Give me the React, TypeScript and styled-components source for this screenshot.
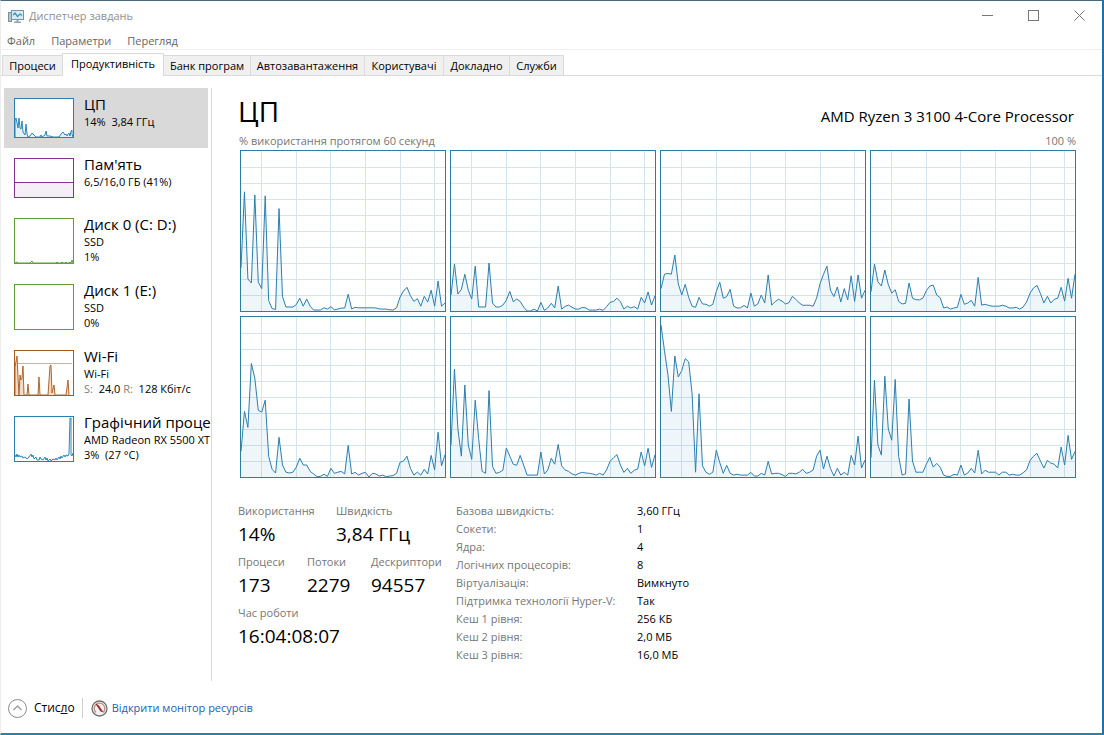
import React from "react";
import styled, { createGlobalStyle } from "styled-components";

const GlobalStyle = createGlobalStyle`
  * { box-sizing: border-box; }
  body { margin: 0; background: #fff; }
  button { font: inherit; color: inherit; border: 0; background: none; padding: 0; cursor: default; }
  dl, dd, dt, h1, h2 { margin: 0; font-weight: 400; }
`;

const Window = styled.div`
  min-height: 100vh;
  display: flex;
  flex-direction: column;
  background: #fff;
  color: #000;
  border-top: 1px solid #476a7e;
  border-right: 2px solid #1b74b0;
  border-bottom: 2px solid #1e86b4;
  border-left: 1px solid #ececec;
  font-family: "Open Sans", "Noto Sans", sans-serif;
  font-size: 11px;
  line-height: 16px;
`;

const TitleBar = styled.header`
  display: flex;
  align-items: center;
  height: 30px;
  padding-left: 7px;
  color: #8f8f8f;
`;

const WindowTitle = styled.span`
  flex: 1;
  padding-left: 4px;
`;

const CaptionButton = styled.button`
  width: 46px;
  height: 30px;
  padding-bottom: 2px;
  display: flex;
  align-items: center;
  justify-content: center;
`;

const MenuBar = styled.nav`
  display: flex;
  gap: 16px;
  height: 19px;
  padding-left: 6px;
  color: #666;
  border-bottom: 1px solid #efefef;
`;

const MenuItem = styled.button`
  height: 19px;
`;

const TabStrip = styled.div`
  display: flex;
  align-items: flex-end;
  height: 26px;
  padding-left: 1px;
  box-shadow: inset 0 -1px 0 #dadada;
`;

const Tab = styled.button<{ $width: number; $active?: boolean }>`
  flex: 0 0 ${(p) => p.$width}px;
  height: ${(p) => (p.$active ? 23 : 21)}px;
  padding-bottom: ${(p) => (p.$active ? 2 : 0)}px;
  background: ${(p) => (p.$active ? "#fff" : "#f0f0f0")};
  border: 1px solid #dadada;
  border-bottom-color: ${(p) => (p.$active ? "#fff" : "#dadada")};
  margin-right: -1px;
  white-space: nowrap;
`;

const Body = styled.div`
  flex: 1;
  display: flex;
  padding-top: 12px;
`;

const Sidebar = styled.aside`
  flex: 0 0 211px;
  display: flex;
  flex-direction: column;
  padding-left: 3px;
  overflow: hidden;
  border-right: 1px solid #d9d9d9;
  margin-bottom: 4px;
`;

const Resource = styled.button<{ $active?: boolean; $tall?: boolean }>`
  display: flex;
  align-items: flex-start;
  gap: 10px;
  height: ${(p) => (p.$tall ? 66 : 60)}px;
  margin-right: ${(p) => (p.$active ? 3 : 0)}px;
  padding: 10px 0 0 10px;
  text-align: left;
  white-space: nowrap;
  overflow: hidden;
  background: ${(p) => (p.$active ? "#d9d9d9" : "transparent")};
`;

const Thumb = styled.svg<{ $color: string; $tall?: boolean }>`
  flex: none;
  width: 60px;
  height: ${(p) => (p.$tall ? 46 : 40)}px;
  background: #fff;
  border: 1px solid ${(p) => p.$color};
`;

const ResourceText = styled.span`
  display: flex;
  flex-direction: column;
  margin-top: -3px;
  line-height: 15px;
`;

const ResourceName = styled.span`
  font-size: 15px;
  line-height: 19px;
`;

const Muted = styled.span`
  color: #808080;
`;

const Main = styled.main`
  flex: 1;
  min-width: 0;
  padding: 4px 26px 0 26px;
`;

const Heading = styled.div`
  display: flex;
  justify-content: space-between;
  align-items: flex-end;
  height: 38px;
`;

const Title = styled.h1`
  font-size: 28px;
  line-height: 38px;
`;

const Model = styled.h2`
  font-size: 15px;
  line-height: 28px;
  padding-right: 2px;
`;

const ScaleRow = styled.div`
  display: flex;
  justify-content: space-between;
  height: 20px;
  padding: 3px 0 0 1px;
  color: #767676;
`;

const ChartGrid = styled.div`
  display: grid;
  grid-template-columns: repeat(4, 1fr);
  gap: 4px;
  padding-left: 2px;
`;

const Chart = styled.svg`
  display: block;
  width: 100%;
  height: 162px;
  border: 1px solid #2b7f9e;
  background: #fff;
`;

const Stats = styled.section`
  display: flex;
  padding-top: 24px;
`;

const Counters = styled.div`
  flex: 0 0 218px;
  display: flex;
  flex-direction: column;
`;

const CounterRow = styled.dl`
  display: flex;
  height: 51px;
`;

const Counter = styled.div<{ $width?: number }>`
  flex: 0 0 ${(p) => (p.$width ? `${p.$width}px` : "auto")};
  dt { color: #767676; line-height: 18px; }
  dd { font-size: 19px; line-height: 28px; }
`;

const Details = styled.dl`
  display: grid;
  grid-template-columns: 181px auto;
  grid-auto-rows: 18px;
  line-height: 18px;
  dt { color: #767676; }
`;

const Footer = styled.footer`
  display: flex;
  align-items: center;
  height: 48px;
  padding: 0 0 2px 7px;
`;

const Collapse = styled.button`
  display: flex;
  align-items: center;
  gap: 7px;
  height: 20px;
  padding-right: 7px;
  border-right: 1px solid #d0d0d0;
  font-size: 12px;
`;

const MonitorLink = styled.a`
  display: flex;
  align-items: center;
  gap: 4px;
  padding-left: 8px;
  color: #1c5fb4;
  text-decoration: none;
`;

const cores: number[][] = [
  [
    27, 74.5, 20, 17.5, 72.5, 18, 14, 72, 6.5, 1.5,
    1, 64, 9, 2.5, 2.5, 2.5, 4, 8, 3, 7.5,
    3, 0.6, 0.6, 0.6, 2, 1.2, 2.7, 0.8, 1.2, 1.8,
    1.9, 10.5, 1.3, 2.3, 2, 2, 2, 2, 2, 1.9,
    1.3, 1.2, 1.2, 0.8, 0.6, 2, 8.7, 12.5, 14.8, 9.6,
    6, 7.7, 3, 9.2, 5.6, 13, 3, 18.7, 3, 5,
  ],
  [
    10, 29.4, 10.6, 13.5, 23, 13, 7.5, 28, 2.5, 2.5,
    2.5, 30, 5, 2.5, 2.5, 3.7, 6.7, 12.3, 5.8, 7.5,
    6, 2.5, 0, 0, 1.2, 0, 5.4, 0.4, 1.9, 4.8,
    1.9, 15.6, 1.2, 2.9, 3.7, 2.3, 1.2, 1.2, 2.3, 1.9,
    0.6, 0.6, 0.6, 1.2, 0.4, 2.7, 5.4, 6, 8, 5.8,
    1.2, 3, 1.9, 2.7, 1.2, 8.5, 5, 11.9, 3.7, 9.6,
  ],
  [
    14, 23, 23.5, 23, 35, 17, 10, 16.7, 8.5, 3,
    2.3, 8.5, 4.4, 4.2, 3, 4.2, 12.3, 18, 8, 9,
    13.5, 3, 1.9, 2, 3.5, 1.9, 11.2, 3, 4.4, 10,
    5, 22.5, 3.7, 5.8, 7.3, 6.2, 4.4, 5.2, 9.2, 7.3,
    5, 3.6, 3.6, 3.6, 3, 8, 17, 23, 28, 13,
    9, 15, 5.6, 14, 7, 22, 6, 22.5, 8, 13,
  ],
  [
    12, 29.4, 18.3, 15.6, 25.6, 16.5, 11.2, 13.3, 6, 4.4,
    4.8, 17.5, 8, 7, 7, 8, 12.7, 15.6, 16.2, 10,
    8.3, 1.9, 2.5, 1.2, 1.9, 2.3, 10.4, 4.2, 5, 6.7,
    3, 21, 3.7, 4.2, 3.5, 3, 3, 3, 3.6, 3,
    1.9, 1.9, 2.3, 1.2, 2.5, 5.6, 11.2, 14.4, 16, 11,
    5, 9.2, 5, 7.3, 8, 14.8, 6.2, 20.4, 8, 23,
  ],
  [
    16, 41, 31, 71, 61.7, 41.7, 40.6, 48, 13, 4.8,
    2.5, 24.8, 7.5, 3, 2.5, 3, 6.2, 11.7, 7.5, 7.5,
    3.5, 1.9, 0.2, 0.4, 1.7, 0.4, 5.4, 2.3, 3, 3.5,
    1.9, 19.8, 1.9, 2.9, 1.2, 2.3, 2.9, 0, 2.3, 1.9,
    0.6, 1.2, 0.2, 0.6, 0.9, 2.3, 9.2, 10, 13, 5.4,
    1.2, 3, 1.2, 4.8, 1.9, 13.5, 4.4, 28, 7, 14,
  ],
  [
    20, 67.5, 30, 13, 57.5, 20, 11, 48, 24, 3.5,
    2.3, 54, 6.7, 2.3, 2.9, 4.2, 18, 13, 8, 7.3,
    13.5, 7.5, 1.2, 1.2, 1.2, 1.2, 15.6, 1.9, 4.4, 11.7,
    8, 20.4, 7, 4.4, 3.5, 1.9, 1.2, 2.3, 2.9, 2.5,
    2.3, 1.9, 1.2, 2.3, 1.2, 4.4, 9.8, 12, 14, 7.5,
    2.9, 5.4, 2.3, 4.2, 5, 15.6, 7, 18, 6, 14,
  ],
  [
    95, 79, 64, 41, 75.6, 62.5, 66.5, 74, 72, 52,
    3, 52, 7, 3, 1.7, 3, 16.7, 9, 2.3, 7.3,
    2.3, 1.2, 1.7, 1.2, 1.2, 1.2, 2.9, 0.6, 0.6, 2.3,
    1.2, 9.8, 1.9, 2.3, 2.3, 1.5, 0.4, 2.3, 2.3, 1.9,
    3, 4.8, 2.3, 3, 4.4, 13, 16.7, 5, 13, 5.4,
    0.6, 5.4, 1.2, 2.9, 1.2, 13.5, 7.5, 25.6, 5.6, 10.6,
  ],
  [
    12, 60.6, 20, 13.7, 63, 30, 23, 61, 13, 1.2,
    1.9, 48.7, 10, 3, 3, 3, 8, 12.3, 6.2, 8.5,
    6.2, 1.2, 0.4, 0.4, 1.7, 1.2, 7.5, 1.2, 2.5, 5.4,
    2.5, 16.7, 1.9, 4.2, 3, 3, 3, 1.2, 3, 3,
    1.2, 1.7, 1.2, 1.2, 2.7, 4.4, 10.4, 13, 14.8, 10,
    5.6, 10.4, 8.7, 8, 5.6, 18.7, 7.5, 26, 11, 16,
  ],
];

const verticals = [6, 16, 26, 36, 46, 56];
const horizontals = [10, 20, 30, 40, 50, 60, 70, 80, 90];

function CoreChart({ values, index }: { values: number[]; index: number }) {
  const points = values.map((v, i) => `${i},${100 - v}`).join(" ");
  return (
    <Chart
      viewBox="0 0 59 100"
      preserveAspectRatio="none"
      role="img"
      aria-label={`ЦП ${index}`}
    >
      <g stroke="#d6e4ec" strokeWidth="1" shapeRendering="crispEdges">
        {verticals.map((x) => (
          <line key={x} x1={x} x2={x} y1="0" y2="100" vectorEffect="non-scaling-stroke" />
        ))}
        {horizontals.map((y) => (
          <line key={y} x1="0" x2="59" y1={y} y2={y} vectorEffect="non-scaling-stroke" />
        ))}
      </g>
      <polygon points={`0,100 ${points} 59,100`} fill="#117dbb" fillOpacity="0.07" />
      <polyline
        points={points}
        fill="none"
        stroke="#2a7fae"
        strokeWidth="1"
        strokeLinejoin="round"
        vectorEffect="non-scaling-stroke"
      />
    </Chart>
  );
}

type ResourceData = {
  name: string;
  lines: React.ReactNode[];
  color: string;
  tall?: boolean;
  active?: boolean;
  drawing?: React.ReactNode;
};

const resources: ResourceData[] = [
  {
    name: "ЦП",
    lines: ["14%\u00a0 3,84 ГГц"],
    color: "#2b7fae",
    active: true,
    drawing: (
      <path
        d="M0 38V21L1 19L3 29L4 19L5 29L6 30L7 22L8 33L10 36L11 25L12 35L13 38L15 37L17 34L19 36L21 38L25 38L26 36L27 38L30 36L31 32L32 37L35 37L38 38L44 38L46 35L48 33L50 36L51 35L52 37L53 35L54 34L55 37L56 32L57 31V35L58 38"
        fill="#e4f1f9"
        stroke="#2b86b8"
      />
    ),
  },
  {
    name: "Пам'ять",
    lines: ["6,5/16,0 ГБ (41%)"],
    color: "#84318f",
    drawing: (
      <>
        <rect x="0" y="23" width="58" height="15" fill="#f4eff7" />
        <path d="M0 23.500H58" stroke="#84318f" />
      </>
    ),
  },
  {
    name: "Диск 0 (C: D:)",
    lines: ["SSD", "1%"],
    color: "#5f9e3a",
    tall: true,
    drawing: (
      <path
        d="M0 44L2 43L3 44H15L17 42L18 44H41L42 43L43 44H46L47 43L48 44H50L51 43L52 44H54L55 43L56 44L57 41L58 44"
        fill="none"
        stroke="#5f9e3a"
      />
    ),
  },
  { name: "Диск 1 (E:)", lines: ["SSD", "0%"], color: "#5f9e3a", tall: true },
  {
    name: "Wi-Fi",
    lines: [
      "Wi-Fi",
      <>
        <Muted>S:</Muted>&nbsp; 24,0 <Muted>R:</Muted>&nbsp; 128 Кбіт/с
      </>,
    ],
    color: "#a65a1c",
    tall: true,
    drawing: (
      <>
        <path d="M0 12.500H57" stroke="#c4b3a6" />
        <path
          d="M0 44V16L2 5L3 26L4 44L5 24L6 29L7 27L8 15L9 44H12L13 33L14 44H23L24 26L25 44H33L35 15L36 14L37 42L39 34L40 44H51L53 29L54 44"
          fill="#f0dccb"
          stroke="#b0652a"
        />
      </>
    ),
  },
  {
    name: "Графічний процесор",
    lines: ["AMD Radeon RX 5500 XT", "3%\u00a0 (27 °C)"],
    color: "#2b7fae",
    tall: true,
    drawing: (
      <path
        d="M0 38L1 40L2 37L3 40L4 38L5 40L7 39L8 41L10 40L12 42L14 40L16 37L17 40L18 38L19 42L21 40L22 43L24 43L25 40L26 42L28 43L30 40L31 43L32 41L33 44L35 42L36 44L38 42L40 43L41 41L42 43L44 40L45 42L46 39L47 41L49 38L50 40L51 38L53 39L54 37L55 1L56 1L56 38L57 39L58 36"
        fill="none"
        stroke="#2b86b8"
      />
    ),
  },
];

const tabs: { label: string; width: number; active?: boolean }[] = [
  { label: "Процеси", width: 61 },
  { label: "Продуктивність", width: 102, active: true },
  { label: "Банк програм", width: 88 },
  { label: "Автозавантаження", width: 115 },
  { label: "Користувачі", width: 80 },
  { label: "Докладно", width: 67 },
  { label: "Служби", width: 55 },
];

const counters: { label: string; value: string; width?: number }[][] = [
  [
    { label: "Використання", value: "14%", width: 98 },
    { label: "Швидкість", value: "3,84 ГГц" },
  ],
  [
    { label: "Процеси", value: "173", width: 69 },
    { label: "Потоки", value: "2279", width: 64 },
    { label: "Дескриптори", value: "94557" },
  ],
  [{ label: "Час роботи", value: "16:04:08:07" }],
];

const details: [string, string][] = [
  ["Базова швидкість:", "3,60 ГГц"],
  ["Сокети:", "1"],
  ["Ядра:", "4"],
  ["Логічних процесорів:", "8"],
  ["Віртуалізація:", "Вимкнуто"],
  ["Підтримка технології Hyper-V:", "Так"],
  ["Кеш 1 рівня:", "256 КБ"],
  ["Кеш 2 рівня:", "2,0 МБ"],
  ["Кеш 3 рівня:", "16,0 МБ"],
];

const AppIcon = () => (
  <svg width="17" height="15" viewBox="0 0 17 15" aria-hidden="true">
    <rect x="0.500" y="3.500" width="3" height="9" fill="#b9c3c8" stroke="#7f9199" />
    <rect x="3.500" y="1.500" width="12" height="9" fill="#d4edf5" stroke="#7c929c" />
    <path d="M5 6L7 4L9.500 7.500L12 5L14 6.500" fill="none" stroke="#3d8fb0" strokeWidth="1.300" />
    <path d="M8.500 11h2v1.500h2.500v1.500h-7v-1.500H8.500z" fill="#98a6ac" />
  </svg>
);

const GaugeIcon = () => (
  <svg width="17" height="17" viewBox="0 0 17 17" aria-hidden="true">
    <circle cx="8.500" cy="8.500" r="7.500" fill="#f4f0ee" stroke="#6f7274" strokeWidth="1.300" />
    <path d="M5 12.500A5.300 5.300 0 1 1 12 12.500" fill="none" stroke="#b98f8a" strokeWidth="1.300" />
    <path d="M5 4L7.500 5.500L11.500 11.500L10 11.500Z" fill="#b3242a" stroke="#a02025" strokeWidth="0.800" />
  </svg>
);

export default function App() {
  return (
    <>
      <GlobalStyle />
      <Window>
        <TitleBar>
          <AppIcon />
          <WindowTitle>Диспетчер завдань</WindowTitle>
          <CaptionButton aria-label="Згорнути">
            <svg width="11" height="11" stroke="#777" fill="none">
              <path d="M0 5.500H11" />
            </svg>
          </CaptionButton>
          <CaptionButton aria-label="Розгорнути">
            <svg width="11" height="11" stroke="#777" fill="none">
              <rect x="0.500" y="0.500" width="10" height="10" />
            </svg>
          </CaptionButton>
          <CaptionButton aria-label="Закрити">
            <svg width="11" height="11" stroke="#777" fill="none">
              <path d="M0.500 0.500L10.500 10.500M10.500 0.500L0.500 10.500" />
            </svg>
          </CaptionButton>
        </TitleBar>
        <MenuBar>
          <MenuItem>Файл</MenuItem>
          <MenuItem>Параметри</MenuItem>
          <MenuItem>Перегляд</MenuItem>
        </MenuBar>
        <TabStrip role="tablist">
          {tabs.map((t) => (
            <Tab key={t.label} role="tab" aria-selected={!!t.active} $width={t.width} $active={t.active}>
              {t.label}
            </Tab>
          ))}
        </TabStrip>
        <Body>
          <Sidebar>
            {resources.map((r) => (
              <Resource key={r.name} $active={r.active} $tall={r.tall}>
                <Thumb $color={r.color} $tall={r.tall} viewBox={r.tall ? "0 0 58 44" : "0 0 58 38"} aria-hidden="true">
                  {r.drawing}
                </Thumb>
                <ResourceText>
                  <ResourceName>{r.name}</ResourceName>
                  {r.lines.map((line, i) => (
                    <span key={i}>{line}</span>
                  ))}
                </ResourceText>
              </Resource>
            ))}
          </Sidebar>
          <Main>
            <Heading>
              <Title>ЦП</Title>
              <Model>AMD Ryzen 3 3100 4-Core Processor</Model>
            </Heading>
            <ScaleRow>
              <span>% використання протягом 60 секунд</span>
              <span>100 %</span>
            </ScaleRow>
            <ChartGrid>
              {cores.map((values, i) => (
                <CoreChart key={i} values={values} index={i} />
              ))}
            </ChartGrid>
            <Stats>
              <Counters>
                {counters.map((row, i) => (
                  <CounterRow key={i}>
                    {row.map((c) => (
                      <Counter key={c.label} $width={c.width}>
                        <dt>{c.label}</dt>
                        <dd>{c.value}</dd>
                      </Counter>
                    ))}
                  </CounterRow>
                ))}
              </Counters>
              <Details>
                {details.map(([label, value]) => (
                  <React.Fragment key={label}>
                    <dt>{label}</dt>
                    <dd>{value}</dd>
                  </React.Fragment>
                ))}
              </Details>
            </Stats>
          </Main>
        </Body>
        <Footer>
          <Collapse>
            <svg width="19" height="19" viewBox="0 0 19 19" fill="none" aria-hidden="true">
              <circle cx="9.500" cy="9.500" r="9" stroke="#8a8a8a" />
              <path d="M5.500 11L9.500 7L13.500 11" stroke="#a0a0a0" strokeWidth="1.500" />
            </svg>
            <span>
              Стис<u>л</u>о
            </span>
          </Collapse>
          <MonitorLink href="#resmon">
            <GaugeIcon />
            Відкрити монітор ресурсів
          </MonitorLink>
        </Footer>
      </Window>
    </>
  );
}
